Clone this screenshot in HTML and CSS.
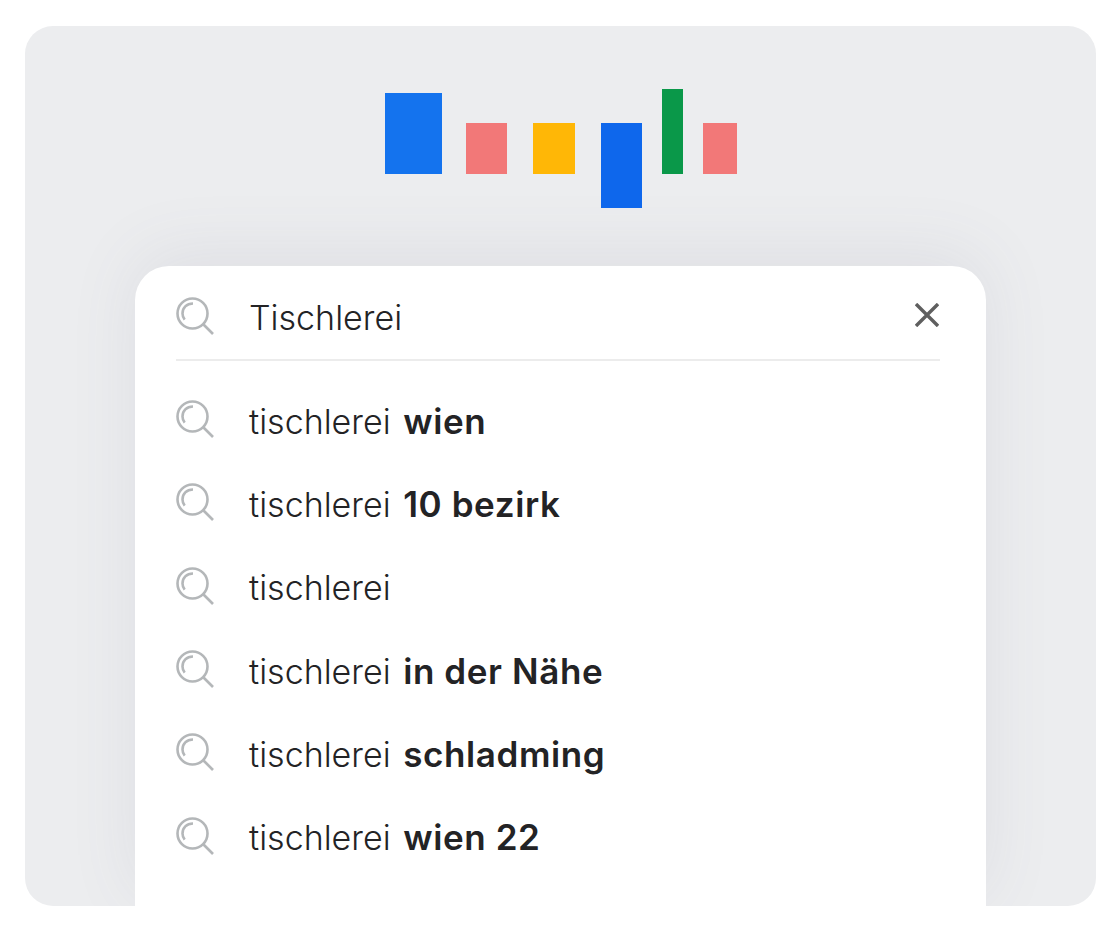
FILE: index.html
```html
<!DOCTYPE html>
<html lang="en">
<head>
    <meta charset="UTF-8">
    <title>Suche</title>
    <link rel="stylesheet" href="styles.css">
</head>
<body>
    <svg class="icon-defs" width="0" height="0">
        <symbol id="search-icon" viewBox="0 0 39 39">
            <circle cx="16.5" cy="16.5" r="15" />
            <path d="M17 6.5C10.5 6.5 6.5 11 6.5 16.5C6.5 19 7.3 21 8.7 22.7" />
            <path d="M27.5 27.5L37 37" />
        </symbol>
    </svg>
    <div class="panel">
        <div class="logo">
            <span class="bar bar-g"></span>
            <span class="bar bar-o1"></span>
            <span class="bar bar-o2"></span>
            <span class="bar bar-g2"></span>
            <span class="bar bar-l"></span>
            <span class="bar bar-e"></span>
        </div>
        <div class="card">
            <div class="search-row">
                <svg class="search-icon"><use href="#search-icon" /></svg>
                <span class="query">Tischlerei</span>
                <svg class="clear-icon" viewBox="0 0 24 24"><path d="M1 1L23 23M23 1L1 23" /></svg>
            </div>
            <ul class="suggestions">
                <li><svg class="search-icon"><use href="#search-icon" /></svg><span>tischlerei <b>wien</b></span></li>
                <li><svg class="search-icon"><use href="#search-icon" /></svg><span>tischlerei <b>10 bezirk</b></span></li>
                <li><svg class="search-icon"><use href="#search-icon" /></svg><span>tischlerei</span></li>
                <li><svg class="search-icon"><use href="#search-icon" /></svg><span>tischlerei <b>in der Nähe</b></span></li>
                <li><svg class="search-icon"><use href="#search-icon" /></svg><span>tischlerei <b>schladming</b></span></li>
                <li><svg class="search-icon"><use href="#search-icon" /></svg><span>tischlerei <b>wien 22</b></span></li>
            </ul>
        </div>
    </div>
</body>
</html>
```

FILE: styles.css
```css
body {
    margin: 0;
    background-color: #ffffff;
    font-family: "Inter", "Liberation Sans", sans-serif;
    color: #232325;
}
.icon-defs {
    display: block;
}
.panel {
    width: 1071px;
    height: 880px;
    margin: 26px 0 0 25px;
    background-color: #ecedef;
    border-radius: 28px;
    overflow: hidden;
}
.logo {
    display: flex;
    align-items: flex-start;
    height: 182px;
    padding: 63px 0 0 360px;
    box-sizing: border-box;
}
.bar {
    display: block;
}
.bar-g {
    width: 57px;
    height: 81px;
    margin-top: 4px;
    background-color: #1473ee;
}
.bar-o1 {
    width: 41px;
    height: 51px;
    margin: 34px 0 0 24px;
    background-color: #f27878;
}
.bar-o2 {
    width: 42px;
    height: 51px;
    margin: 34px 0 0 26px;
    background-color: #ffb706;
}
.bar-g2 {
    width: 41px;
    height: 85px;
    margin: 34px 0 0 26px;
    background-color: #0e67ec;
}
.bar-l {
    width: 21px;
    height: 85px;
    margin-left: 20px;
    background-color: #0a9849;
}
.bar-e {
    width: 34px;
    height: 51px;
    margin: 34px 0 0 20px;
    background-color: #f27878;
}
.card {
    width: 851px;
    height: 640px;
    margin: 58px 0 0 110px;
    padding: 0 46px 0 41px;
    box-sizing: border-box;
    background-color: #ffffff;
    border-radius: 34px 34px 0 0;
    box-shadow: 0 -12px 70px rgba(90, 90, 120, 0.09);
}
.search-row {
    display: flex;
    align-items: center;
    height: 95px;
    padding-top: 8px;
    box-sizing: border-box;
    border-bottom: 2px solid #ececec;
    font-weight: 300;
}
.search-icon {
    width: 39px;
    height: 39px;
    flex: none;
    fill: none;
    stroke: #b4b7b9;
    stroke-width: 2.6;
    margin-right: 34px;
}
.query {
    flex: 1;
    padding-top: 2px;
    font-size: 34px;
}
.clear-icon {
    width: 24px;
    height: 24px;
    margin: 0 1px 3px 0;
    fill: none;
    stroke: #5f5f5f;
    stroke-width: 3.4;
}
.suggestions {
    margin: 0;
    padding: 17px 0 0;
    list-style: none;
    font-size: 34px;
    font-weight: 300;
}
.suggestions li {
    display: flex;
    align-items: center;
    height: 83.3px;
}
.suggestions span {
    padding-top: 2px;
}
.suggestions b {
    margin-left: 3px;
    font-size: 35px;
    font-weight: 600;
    letter-spacing: 0.6px;
}
```
